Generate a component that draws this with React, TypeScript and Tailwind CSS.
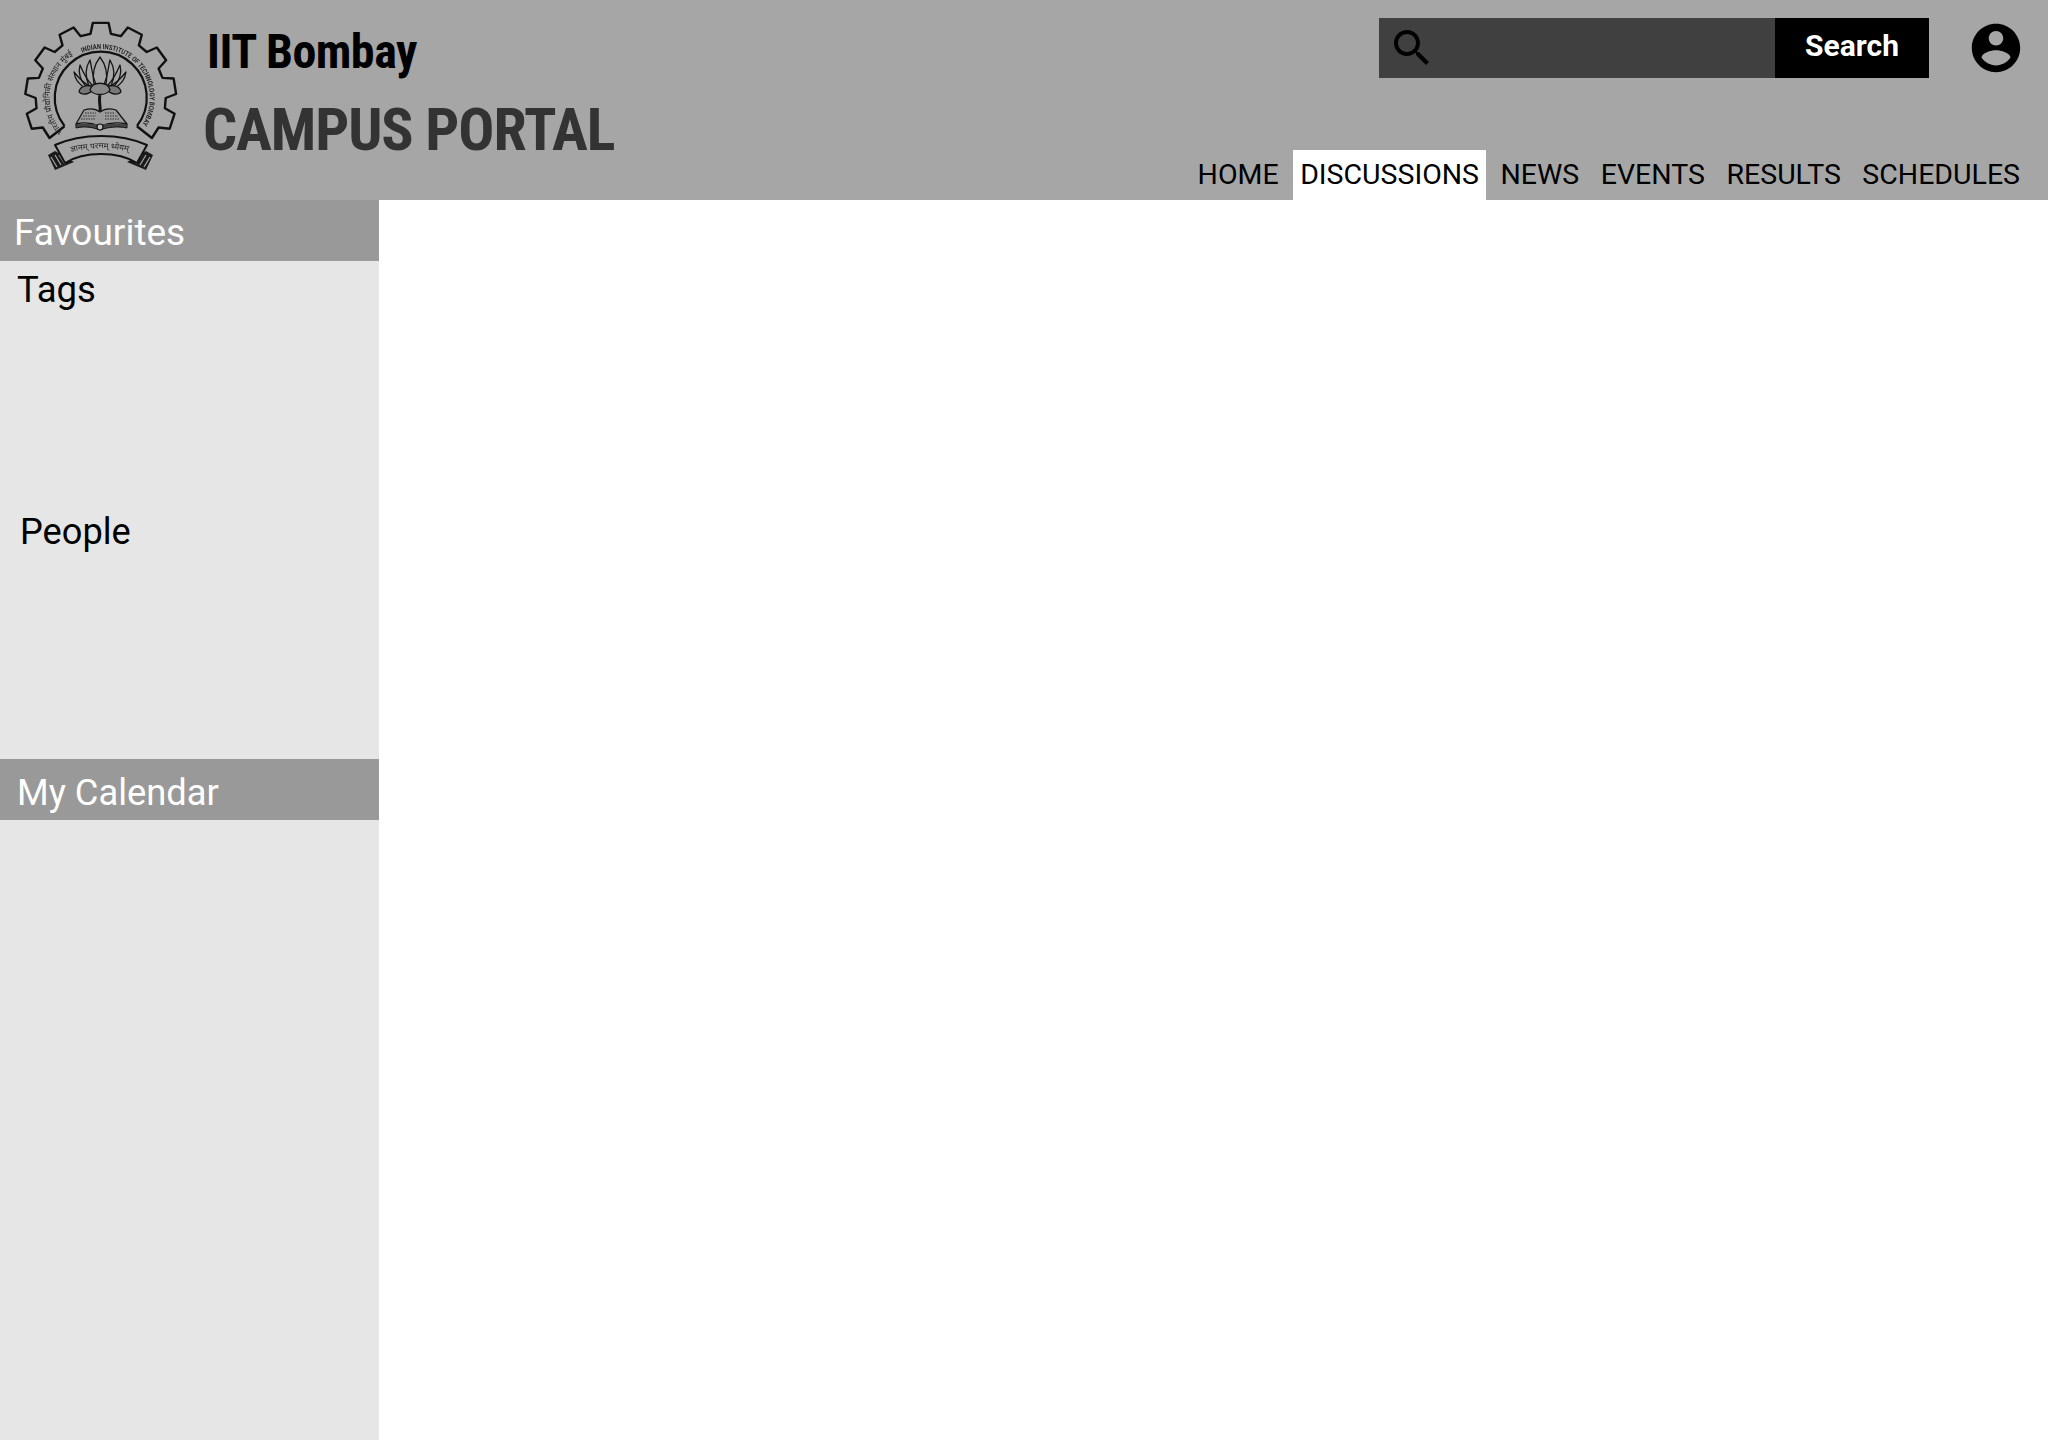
const navItems = ["HOME", "DISCUSSIONS", "NEWS", "EVENTS", "RESULTS", "SCHEDULES"];

// outline of the gear, open at the bottom where the ribbon sits
function gearPath() {
  const cx = 100.7;
  const cy = 98;
  const outer = 75.5;
  const root = 65;
  const pt = (deg: number, r: number) => {
    const a = ((deg - 90) * Math.PI) / 180;
    return `${(cx + r * Math.cos(a)).toFixed(1)} ${(cy + r * Math.sin(a)).toFixed(1)}`;
  };
  const step = 27;
  let d = `M${pt(-128, 46)} L${pt(-128, root)}`;
  for (let i = -4; i <= 4; i++) {
    const t = i * step;
    d += ` L${pt(t - 9, root)} L${pt(t - 6, outer)} L${pt(t + 6, outer)} L${pt(t + 9, root)}`;
  }
  d += ` L${pt(128, root)} L${pt(128, 46)}`;
  return d;
}

function Logo() {
  return (
    <svg width="180" height="170" viewBox="10 10 180 170" className="shrink-0 blur-[0.4px]">
      <defs>
        <path id="arcRight" d="M82 52.7 A49 49 0 0 1 141 126" />
        <path id="arcLeft" d="M63 132 A51 51 0 0 1 83 50" />
        <path id="arcRibbon" d="M71 152 Q101 145 131 152" />
      </defs>
      <path d={gearPath()} fill="none" stroke="#111" strokeWidth="2.4" strokeLinejoin="round" />
      <path d="M64.5 126 A46 46 0 1 1 137 126" fill="none" stroke="#111" strokeWidth="2.2" />
      <text fontFamily="Roboto, sans-serif" fontSize="7" fontWeight="700" fill="#222">
        <textPath href="#arcRight" textLength="124" lengthAdjust="spacingAndGlyphs">
          INDIAN INSTITUTE OF TECHNOLOGY BOMBAY
        </textPath>
      </text>
      <text fontFamily="'Noto Sans', Roboto, sans-serif" fontSize="8" fill="#222">
        <textPath href="#arcLeft" textLength="88" lengthAdjust="spacingAndGlyphs">
          भारतीय प्रौद्योगिकी संस्थान मुंबई
        </textPath>
      </text>

      {/* lotus */}
      <g fill="none" stroke="#151515" strokeWidth="1.3" strokeLinejoin="round">
        <path d="M100 57 C94 65 92 74 94 84 L106 84 C108 74 106 65 100 57Z" />
        <path d="M90 60 C85 68 85 77 89 86 L96 84 C92 76 92 68 90 60Z" />
        <path d="M110 60 C115 68 115 77 111 86 L104 84 C108 76 108 68 110 60Z" />
        <path d="M80 65 C78 72 80 81 87 87 L92 85 C86 79 83 72 80 65Z" />
        <path d="M120 65 C122 72 120 81 113 87 L108 85 C114 79 117 72 120 65Z" />
        <path d="M74 72 C75 79 79 85 86 88 L88 85 C82 82 78 77 74 72Z" />
        <path d="M126 72 C125 79 121 85 114 88 L112 85 C118 82 122 77 126 72Z" />
        <path d="M79 92 C80 85 90 84 94 88 C91 94 83 96 79 92Z" fill="#777" />
        <path d="M121 92 C120 85 110 84 106 88 C109 94 117 96 121 92Z" fill="#777" />
        <path d="M90 90 C92 81 108 81 110 90 C106 96 94 96 90 90Z" fill="#8a8a8a" />
      </g>
      <path d="M100 95 C98 102 102 108 100 122" fill="none" stroke="#151515" strokeWidth="3" />

      {/* book */}
      <path d="M76 124 L84 110 C90 108 96 109 100 112 C104 109 110 108 116 110 L127 124 C118 122 108 123 100 126 C92 123 84 122 76 124Z" fill="#9a9a9a" stroke="#151515" strokeWidth="1.3" strokeLinejoin="round" />
      <path d="M76 124 L76 128 C84 126 92 127 100 130 C108 127 118 126 127 128 L127 124" fill="#444" stroke="#151515" strokeWidth="1" />
      <path d="M85 113 L96 113 M83 116 L96 116 M81 119 L96 119 M105 113 L115 113 M105 116 L118 116 M105 119 L120 119" stroke="#333" strokeWidth="1" strokeDasharray="1.5 1" />
      <circle cx="100" cy="127" r="3" fill="#bbb" stroke="#151515" strokeWidth="1.2" />

      {/* ribbon */}
      <path d="M48 155 L55 151 L74 162 L55 170Z" fill="#1a1a1a" />
      <path d="M153 155 L146 151 L127 162 L146 170Z" fill="#1a1a1a" />
      <path d="M51 157 L57 167 M55 155 L61 165 M59 155 L65 164 M150 157 L144 167 M146 155 L140 165 M142 155 L136 164" stroke="#a6a6a6" strokeWidth="1.2" />
      <path d="M55 145 C82 133 120 133 147 145 L137 163 C118 151 84 151 65 163Z" fill="#a6a6a6" stroke="#111" strokeWidth="2" strokeLinejoin="round" />
      <text fontFamily="'Noto Sans', Roboto, sans-serif" fontSize="8" fill="#222">
        <textPath href="#arcRibbon" textLength="58" lengthAdjust="spacingAndGlyphs">
          ज्ञानम् परमम् ध्येयम्
        </textPath>
      </text>
    </svg>
  );
}

function SearchIcon() {
  return (
    <svg width="48" height="48" viewBox="0 0 24 24" fill="#000" className="shrink-0">
      <path d="M15.5 14h-.79l-.28-.27C15.41 12.59 16 11.11 16 9.5 16 5.91 13.09 3 9.5 3S3 5.91 3 9.5 5.91 16 9.5 16c1.61 0 3.09-.59 4.23-1.57l.27.28v.79l5 4.99L20.49 19l-4.99-5zm-6 0C7.01 14 5 11.99 5 9.5S7.01 5 9.5 5 14 7.01 14 9.5 11.99 14 9.5 14z" />
    </svg>
  );
}

function AccountIcon() {
  return (
    <svg width="58" height="58" viewBox="0 0 24 24" fill="#000" className="shrink-0">
      <path d="M12 2C6.48 2 2 6.48 2 12s4.48 10 10 10 10-4.48 10-10S17.52 2 12 2zm0 3c1.66 0 3 1.34 3 3s-1.34 3-3 3-3-1.34-3-3 1.34-3 3-3zm0 14.2c-2.5 0-4.71-1.28-6-3.22.03-1.99 4-3.08 6-3.08 1.99 0 5.97 1.09 6 3.08-1.29 1.94-3.5 3.22-6 3.22z" />
    </svg>
  );
}

function Header() {
  return (
    <header className="flex h-[200px] justify-between bg-[#a6a6a6]">
      <div className="flex pl-[10px] pt-[10px]">
        <Logo />
        <div className="ml-[13px] flex flex-col pt-[12px]">
          <div className="pl-[4px] text-[48px] leading-[60px] font-bold tracking-[-0.5px] text-black [font-stretch:75%]">IIT Bombay</div>
          <div className="mt-[12px] text-[60px] leading-[72px] font-bold tracking-[-1.1px] text-[#333333] [font-stretch:75%]">CAMPUS PORTAL</div>
        </div>
      </div>
      <div className="flex flex-col items-end justify-between">
        <div className="flex items-start pt-[18px]">
          <div className="flex h-[60px] w-[396px] items-center bg-[#404040] pl-[9px]">
            <SearchIcon />
          </div>
          <button className="h-[60px] w-[154px] bg-black pb-[6px] text-[30px] font-bold text-white">Search</button>
          <div className="mt-[1px] ml-[38px] mr-[23px]">
            <AccountIcon />
          </div>
        </div>
        <nav className="flex h-[50px] gap-[7.5px] pr-[21px]">
          {navItems.map((item) => (
            <a
              key={item}
              className={`flex items-center px-[7px] text-[28.5px] font-normal text-black ${
                item === "DISCUSSIONS" ? "bg-white" : ""
              }`}
            >
              {item}
            </a>
          ))}
        </nav>
      </div>
    </header>
  );
}

function Sidebar() {
  return (
    <aside className="w-[379px] shrink-0 bg-[#e6e6e6]">
      <div className="flex h-[61px] items-center bg-[#999999] pl-[14px] pt-[4px] text-[37px] text-white">Favourites</div>
      <div className="h-[242px] pl-[17px] pt-[6px] text-[36.5px] leading-[46px] text-black">Tags</div>
      <div className="h-[256px] pl-[20px] pt-[6px] text-[36.2px] leading-[46px] text-black">People</div>
      <div className="flex h-[61px] items-center bg-[#999999] pl-[17px] pt-[7px] text-[36.3px] text-white">My Calendar</div>
    </aside>
  );
}

export default function App() {
  return (
    <div className="flex min-h-[1440px] flex-col bg-white font-['Roboto',sans-serif]">
      <Header />
      <div className="flex flex-1">
        <Sidebar />
        <main className="flex-1 bg-white" />
      </div>
    </div>
  );
}
